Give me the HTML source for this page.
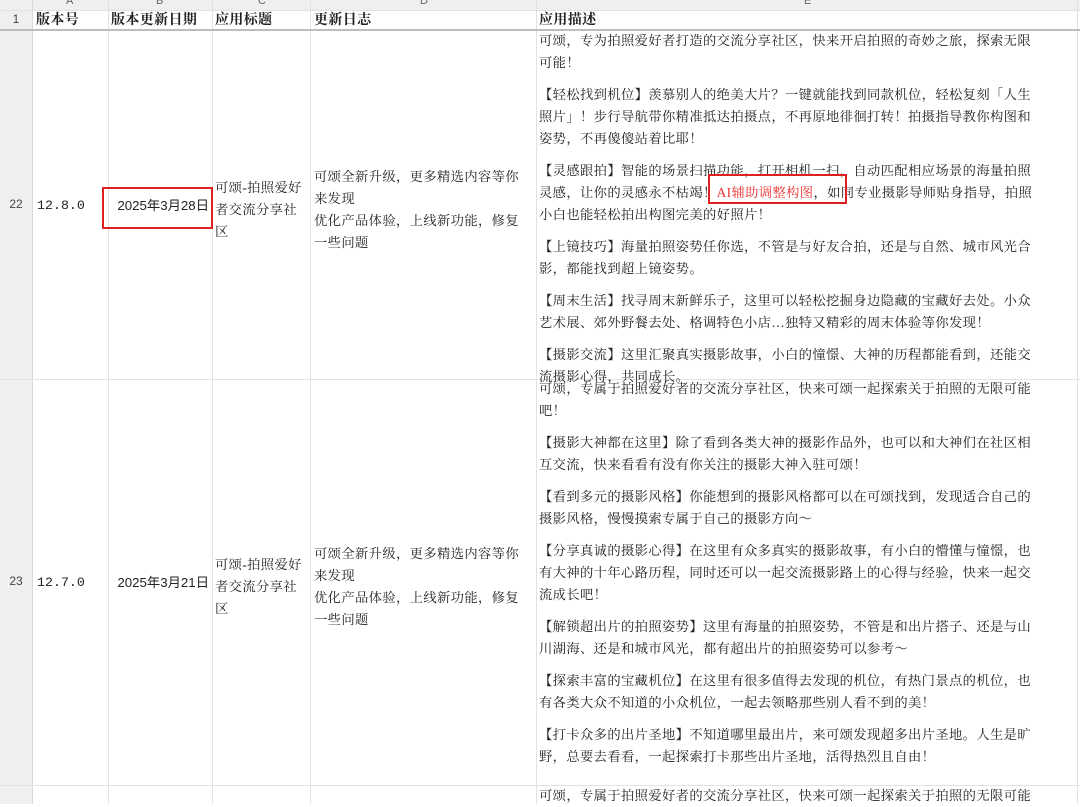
<!DOCTYPE html>
<html><head><meta charset="utf-8"><style>
body{margin:0;width:1080px;height:804px;overflow:hidden;background:#fff;position:relative;font-family:"Liberation Serif","Noto Serif CJK SC",serif;font-size:13.3px;letter-spacing:0.37px;color:#222}
.a{position:absolute}
.vl{position:absolute;top:0;width:1px;height:804px;background:#e2e2e2}
.hl{position:absolute;left:0;width:1080px;height:1px;background:#e2e2e2}
.t{position:absolute;line-height:22px;white-space:nowrap}
.p{margin-bottom:10px}
.h{font-weight:bold;font-size:14px;top:11px;line-height:20px}
.cl{position:absolute;top:-5px;font-family:"Liberation Sans",sans-serif;font-size:11px;color:#666}
.rn{position:absolute;left:0;width:32px;text-align:center;font-family:"Liberation Sans",sans-serif;font-size:12px;color:#444;letter-spacing:0}
</style></head><body>
<div class="a" style="left:0;top:0;width:1080px;height:10px;background:#efefef"></div>
<div class="a" style="left:0;top:0;width:32px;height:804px;background:#efefef"></div>
<div class="vl" style="left:32px;background:#d8d8d8"></div>
<div class="vl" style="left:108px"></div>
<div class="vl" style="left:212px"></div>
<div class="vl" style="left:310px"></div>
<div class="vl" style="left:536px"></div>
<div class="vl" style="left:1077px"></div>
<div class="hl" style="top:10px"></div>
<div class="hl" style="top:29px;height:2px;background:#bdbdbd"></div>
<div class="hl" style="top:379px"></div>
<div class="hl" style="top:785px"></div>
<div class="cl" style="left:66px">A</div><div class="cl" style="left:156px">B</div><div class="cl" style="left:258px">C</div><div class="cl" style="left:420px">D</div><div class="cl" style="left:804px">E</div>
<div class="rn" style="top:12px">1</div>
<div class="rn" style="top:197px">22</div>
<div class="rn" style="top:574px">23</div>
<div class="t h" style="left:36px">版本号</div>
<div class="t h" style="left:111px">版本更新日期</div>
<div class="t h" style="left:215px">应用标题</div>
<div class="t h" style="left:314px">更新日志</div>
<div class="t h" style="left:539px">应用描述</div>

<div class="t" style="left:37px;top:195px;font-family:'Liberation Mono',monospace;letter-spacing:0">12.8.0</div>
<div class="t" style="left:112px;top:195px;width:97px;text-align:right;font-family:'Liberation Sans','Noto Sans CJK SC',sans-serif;letter-spacing:0">2025年3月28日</div>
<div class="a" style="left:102px;top:187px;width:107px;height:38px;border:2px solid #e02020"></div>
<div class="t" style="left:215px;top:177px">可颂-拍照爱好<br>者交流分享社<br>区</div>
<div class="t" style="left:314px;top:166px">可颂全新升级，更多精选内容等你<br>来发现<br>优化产品体验，上线新功能，修复<br>一些问题</div>

<div class="t" style="left:539px;top:30px">
<div class="p">可颂，专为拍照爱好者打造的交流分享社区，快来开启拍照的奇妙之旅，探索无限<br>可能！</div>
<div class="p">【轻松找到机位】羡慕别人的绝美大片？一键就能找到同款机位，轻松复刻「人生<br>照片」！步行导航带你精准抵达拍摄点，不再原地徘徊打转！拍摄指导教你构图和<br>姿势，不再傻傻站着比耶！</div>
<div class="p">【灵感跟拍】智能的场景扫描功能，打开相机一扫，自动匹配相应场景的海量拍照<br>灵感，让你的灵感永不枯竭！<span style="color:#e83030">AI辅助调整构图</span>，如同专业摄影导师贴身指导，拍照<br>小白也能轻松拍出构图完美的好照片！</div>
<div class="p">【上镜技巧】海量拍照姿势任你选，不管是与好友合拍，还是与自然、城市风光合<br>影，都能找到超上镜姿势。</div>
<div class="p">【周末生活】找寻周末新鲜乐子，这里可以轻松挖掘身边隐藏的宝藏好去处。小众<br>艺术展、郊外野餐去处、格调特色小店…独特又精彩的周末体验等你发现！</div>
<div class="p">【摄影交流】这里汇聚真实摄影故事，小白的憧憬、大神的历程都能看到，还能交<br>流摄影心得，共同成长。</div>
</div>
<div class="a" style="left:708px;top:174px;width:135px;height:26px;border:2px solid #e02020"></div>

<div class="t" style="left:37px;top:572px;font-family:'Liberation Mono',monospace;letter-spacing:0">12.7.0</div>
<div class="t" style="left:112px;top:572px;width:97px;text-align:right;font-family:'Liberation Sans','Noto Sans CJK SC',sans-serif;letter-spacing:0">2025年3月21日</div>
<div class="t" style="left:215px;top:554px">可颂-拍照爱好<br>者交流分享社<br>区</div>
<div class="t" style="left:314px;top:543px">可颂全新升级，更多精选内容等你<br>来发现<br>优化产品体验，上线新功能，修复<br>一些问题</div>
<div class="t" style="left:539px;top:378px">
<div class="p">可颂，专属于拍照爱好者的交流分享社区，快来可颂一起探索关于拍照的无限可能<br>吧！</div>
<div class="p">【摄影大神都在这里】除了看到各类大神的摄影作品外，也可以和大神们在社区相<br>互交流，快来看看有没有你关注的摄影大神入驻可颂！</div>
<div class="p">【看到多元的摄影风格】你能想到的摄影风格都可以在可颂找到，发现适合自己的<br>摄影风格，慢慢摸索专属于自己的摄影方向～</div>
<div class="p">【分享真诚的摄影心得】在这里有众多真实的摄影故事，有小白的懵懂与憧憬，也<br>有大神的十年心路历程，同时还可以一起交流摄影路上的心得与经验，快来一起交<br>流成长吧！</div>
<div class="p">【解锁超出片的拍照姿势】这里有海量的拍照姿势，不管是和出片搭子、还是与山<br>川湖海、还是和城市风光，都有超出片的拍照姿势可以参考～</div>
<div class="p">【探索丰富的宝藏机位】在这里有很多值得去发现的机位，有热门景点的机位，也<br>有各类大众不知道的小众机位，一起去领略那些别人看不到的美！</div>
<div class="p">【打卡众多的出片圣地】不知道哪里最出片，来可颂发现超多出片圣地。人生是旷<br>野，总要去看看，一起探索打卡那些出片圣地，活得热烈且自由！</div>
</div>
<div class="t" style="left:539px;top:785px">可颂，专属于拍照爱好者的交流分享社区，快来可颂一起探索关于拍照的无限可能</div>
</body></html>
